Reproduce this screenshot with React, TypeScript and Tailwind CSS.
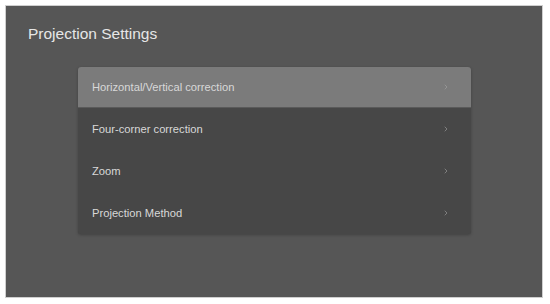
import { ChevronRight } from "lucide-react";

const items = [
  "Horizontal/Vertical correction",
  "Four-corner correction",
  "Zoom",
  "Projection Method",
];

export default function App() {
  return (
    <div className="h-[304px] w-[550px] bg-white p-[5px] pr-[7px] pb-[6px] font-['Liberation_Sans',sans-serif]">
      <div className="flex h-full w-full flex-col border border-[#cfcfcf] bg-[#565656]">
        <h1 className="pl-[22px] pt-[18px] text-[15.5px] leading-[20px] text-[#e6e6e6]">Projection Settings</h1>
        <div className="ml-[72px] mt-[23px] w-[393px] overflow-hidden rounded-[3px] bg-[#474747] shadow-[0_1px_3px_rgba(0,0,0,0.25)]">
          {items.map((label, i) => (
            <div
              key={label}
              className={
                i === 0
                  ? "flex h-[41px] items-center justify-between border-b border-[#5a5a5a] bg-[#7b7b7b] pl-[14px] pr-[21px]"
                  : "flex h-[42px] items-center justify-between bg-[#474747] pl-[14px] pr-[21px]"
              }
            >
              <span className="text-[11.2px] text-[#d8d8d8]">{label}</span>
              <ChevronRight size={8} strokeWidth={2.5} className={i === 0 ? "text-[#999]" : "text-[#8a8a8a]"} />
            </div>
          ))}
        </div>
      </div>
    </div>
  );
}
